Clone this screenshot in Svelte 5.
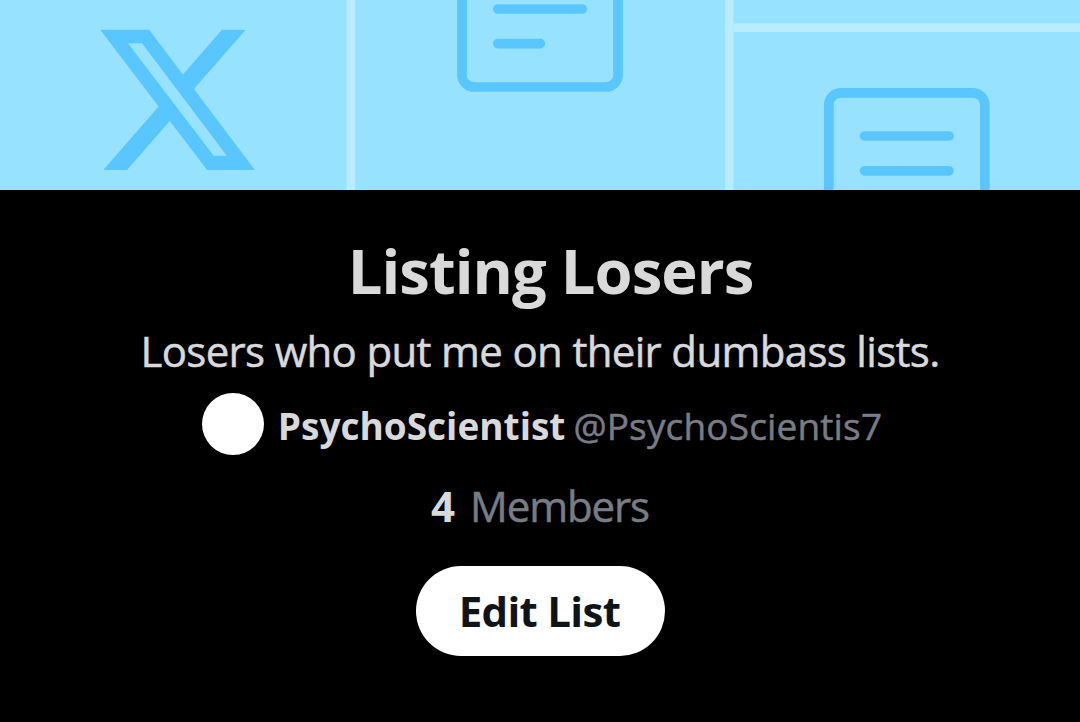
<script lang="ts">
  const list = {
    name: 'Listing Losers',
    description: 'Losers who put me on their dumbass lists.',
    owner: 'PsychoScientist',
    handle: '@PsychoScientis7',
    members: 4
  };
</script>

<div class="list-page">
  <!-- Banner -->
  <svg class="banner" viewBox="0 0 1080 190" aria-hidden="true">
    <rect width="1080" height="190" fill="#97e2ff" />
    <g fill="#b9ecff">
      <rect x="346.5" y="0" width="8.7" height="190" />
      <rect x="725" y="0" width="8.5" height="190" />
      <rect x="733.5" y="23.5" width="346.5" height="8.5" />
    </g>
    <path
      transform="translate(91.2 13.5) scale(7.17 7.195)"
      fill="#5ac6ff"
      d="M18.244 2.25h3.308l-7.227 8.26 8.502 11.24H16.17l-5.214-6.817L4.99 21.75H1.68l7.73-8.835L1.254 2.25H8.08l4.713 6.231zm-1.161 17.52h1.833L7.084 4.126H5.117z"
    />
    <g fill="none" stroke="#5ac6ff" stroke-width="9.7" stroke-linecap="round">
      <rect x="462" y="-69" width="156" height="156" rx="12" />
      <path d="M497.8 9H582.2M497.8 43.6H540.3" />
      <rect x="828.8" y="92.8" width="156" height="156" rx="12" />
      <path d="M864.6 136H948.9M864.6 170.8H948.9" />
    </g>
  </svg>

  <main class="list-info">
    <h1 class="title">{list.name}</h1>
    <p class="description">{list.description}</p>

    <div class="owner">
      <span class="avatar"></span>
      <span class="owner-name">{list.owner}</span>
      <span class="handle">{list.handle}</span>
    </div>

    <div class="members">
      <span class="count">{list.members}</span>
      <span class="label">Members</span>
    </div>

    <button class="edit-btn">Edit List</button>
  </main>
</div>

<style>
  :global(body) {
    margin: 0;
    background: #000;
  }

  .list-page {
    width: 100%;
    height: 722px;
    overflow: hidden;
    background: #000;
    color: #d9d9d9;
    font-family: 'Open Sans', 'Noto Sans', sans-serif;
  }

  .banner {
    display: block;
    width: 100%;
    height: 190px;
  }

  .list-info {
    display: flex;
    flex-direction: column;
    align-items: center;
    white-space: nowrap;
  }

  .title {
    margin: 40px 0 0 21px;
    font-size: 61.5px;
    font-weight: 700;
    line-height: 80px;
    letter-spacing: -0.95px;
  }

  .description {
    margin: 14px 0 0;
    font-size: 42px;
    line-height: 54px;
    letter-spacing: -0.67px;
  }

  /* the regular weight is a little thin on black */
  .description,
  .handle,
  .label {
    -webkit-text-stroke: 0.5px currentColor;
  }

  .owner {
    display: flex;
    align-items: center;
    height: 62px;
    margin: 15px 0 0 4px;
    font-size: 37px;
    line-height: 62px;
  }

  .avatar {
    width: 62px;
    height: 62px;
    margin-right: 14px;
    border-radius: 50%;
    background: #fff;
  }

  .owner-name,
  .handle {
    padding-top: 4px;
  }

  .owner-name {
    margin-right: 8px;
    font-weight: 700;
  }

  .handle {
    color: #797c82;
    letter-spacing: 0.15px;
  }

  .members {
    display: flex;
    gap: 15px;
    margin-top: 24px;
    font-size: 42px;
    line-height: 54px;
  }

  .count {
    font-weight: 700;
  }

  .label {
    color: #797c82;
    letter-spacing: -1.1px;
  }

  .edit-btn {
    width: 249px;
    height: 90px;
    margin-top: 33px;
    padding: 0 1px 2px 0;
    border: none;
    border-radius: 45px;
    background: #fff;
    color: #0f1419;
    font-family: inherit;
    font-size: 42px;
    font-weight: 700;
    letter-spacing: -0.7px;
    cursor: pointer;
  }
</style>
